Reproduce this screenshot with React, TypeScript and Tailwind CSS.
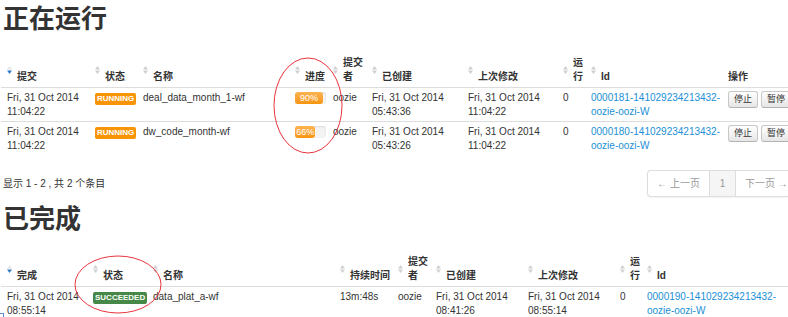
import React from "react";

type Sort = "both" | "desc" | "none";

const FONT = "font-['Liberation_Sans','Noto_Sans_CJK_SC',sans-serif]";

function SortIcon({ state }: { state: Sort }) {
  if (state === "none") return null;
  const up = state === "desc" ? "#e6e6e6" : "#d0d0d0";
  const down = state === "desc" ? "#2f7bc4" : "#d0d0d0";
  return (
    <svg
      className="absolute left-[6px] top-1/2 -translate-y-1/2"
      width="5"
      height="9"
      viewBox="0 0 5 9"
    >
      <polygon points="0,4 2.5,0.5 5,4" fill={up} />
      <polygon points="0,5 5,5 2.5,8.5" fill={down} />
    </svg>
  );
}

function Th({ label, sort = "both" }: { label: string; sort?: Sort }) {
  return (
    <th
      className={`relative text-left align-bottom font-bold pt-[3px] pb-[3px] pr-0 ${
        sort === "none" ? "pl-[6px]" : "pl-[16px]"
      }`}
    >
      <SortIcon state={sort} />
      {label}
    </th>
  );
}

function Td({ children }: { children?: React.ReactNode }) {
  return (
    <td className="align-top border-t border-[#dddddd] pt-[3px] pb-[2px] pl-[6px] pr-0">
      {children}
    </td>
  );
}

function TwoLine({ a, b }: { a: string; b: string }) {
  return (
    <>
      <span className="block whitespace-nowrap">{a}</span>
      <span className="block whitespace-nowrap">{b}</span>
    </>
  );
}

function Badge({ text, tone }: { text: string; tone: "warn" | "ok" }) {
  return (
    <span
      className={`mt-[1px] inline-block rounded-[2px] px-[2px] text-[8px] leading-[12px] font-bold text-white ${
        tone === "warn" ? "bg-[#f89406]" : "bg-[#468847]"
      }`}
    >
      {text}
    </span>
  );
}

function Progress({ pct }: { pct: number }) {
  return (
    <div className="mt-[1px] h-[12px] w-[31px] rounded-[3px] bg-[#f3f3f3] shadow-[inset_0_1px_2px_rgba(0,0,0,0.1)]">
      <div
        className="h-full rounded-[3px] bg-linear-to-b from-[#fbb450] to-[#f89406] text-center text-[9px] leading-[12px] whitespace-nowrap text-white"
        style={{ width: `${pct}%` }}
      >
        {pct}%
      </div>
    </div>
  );
}

function Btn({ label }: { label: string }) {
  return (
    <button className="h-[17px] shrink-0 rounded-[3px] border border-[#c8c8c8] border-b-[#b3b3b3] bg-linear-to-b from-white to-[#e6e6e6] px-[5px] text-[9px] leading-[15px] text-[#333] shadow-[inset_0_1px_0_rgba(255,255,255,0.3)]">
      {label}
    </button>
  );
}

function JobLink({ id }: { id: string }) {
  return (
    <a className="block text-[#1b8fd6]">
      <TwoLine a={`${id}-141029234213432-`} b="oozie-oozi-W" />
    </a>
  );
}

const running = [
  {
    sub: "11:04:22",
    name: "deal_data_month_1-wf",
    pct: 90,
    created: "05:43:36",
    mod: "11:04:22",
    id: "0000181",
  },
  {
    sub: "11:04:22",
    name: "dw_code_month-wf",
    pct: 66,
    created: "05:43:26",
    mod: "11:04:22",
    id: "0000180",
  },
];

export default function App() {
  return (
    <div
      className={`relative h-[317px] w-[788px] overflow-hidden bg-white text-[10px] leading-[14px] text-[#333] ${FONT}`}
    >
      <h2 className="pt-[6px] pl-[3px] text-[26px] leading-[26px] font-bold text-[#333]">
        正在运行
      </h2>

      <table className="mt-[21px] ml-[1px] w-[841px] table-fixed border-collapse">
        <colgroup>
          <col className="w-[88px]" />
          <col className="w-[48px]" />
          <col className="w-[152px]" />
          <col className="w-[38px]" />
          <col className="w-[39px]" />
          <col className="w-[96px]" />
          <col className="w-[95px]" />
          <col className="w-[28px]" />
          <col className="w-[137px]" />
          <col className="w-[120px]" />
        </colgroup>
        <thead>
          <tr>
            <Th label="提交" sort="desc" />
            <Th label="状态" />
            <Th label="名称" />
            <Th label="进度" />
            <Th label="提交者" />
            <Th label="已创建" />
            <Th label="上次修改" />
            <Th label="运行" />
            <Th label="Id" />
            <Th label="操作" sort="none" />
          </tr>
        </thead>
        <tbody>
          {running.map((r) => (
            <tr key={r.id}>
              <Td>
                <TwoLine a="Fri, 31 Oct 2014" b={r.sub} />
              </Td>
              <Td>
                <Badge text="RUNNING" tone="warn" />
              </Td>
              <Td>{r.name}</Td>
              <Td>
                <Progress pct={r.pct} />
              </Td>
              <Td>oozie</Td>
              <Td>
                <TwoLine a="Fri, 31 Oct 2014" b={r.created} />
              </Td>
              <Td>
                <TwoLine a="Fri, 31 Oct 2014" b={r.mod} />
              </Td>
              <Td>0</Td>
              <Td>
                <JobLink id={r.id} />
              </Td>
              <Td>
                <div className="flex gap-[3px]">
                  <Btn label="停止" />
                  <Btn label="暂停" />
                </div>
              </Td>
            </tr>
          ))}
        </tbody>
      </table>

      <div className="mt-[15px] flex h-[27px] items-center">
        <div className="w-[647px] shrink-0 pl-[3px]">显示 1 - 2 , 共 2 个条目</div>
        <div className="flex h-[27px] shrink-0 rounded-l-[4px] border border-r-0 border-[#dddddd] text-[#999] shadow-[0_1px_2px_rgba(0,0,0,0.05)]">
          <span className="flex w-[61px] items-center justify-center whitespace-nowrap">
            ← 上一页
          </span>
          <span className="flex w-[26px] items-center justify-center border-l border-[#dddddd] bg-[#f5f5f5]">
            1
          </span>
          <span className="flex items-center border-l border-[#dddddd] pl-[9px] whitespace-nowrap">
            下一页 →
          </span>
        </div>
      </div>

      <h2 className="mt-[9px] pl-[3px] text-[26px] leading-[26px] font-bold text-[#333]">
        已完成
      </h2>

      <table className="mt-[20px] ml-[1px] w-[800px] table-fixed border-collapse">
        <colgroup>
          <col className="w-[86px]" />
          <col className="w-[60px]" />
          <col className="w-[187px]" />
          <col className="w-[58px]" />
          <col className="w-[38px]" />
          <col className="w-[92px]" />
          <col className="w-[92px]" />
          <col className="w-[27px]" />
          <col className="w-[160px]" />
        </colgroup>
        <thead>
          <tr>
            <Th label="完成" sort="desc" />
            <Th label="状态" />
            <Th label="名称" />
            <Th label="持续时间" />
            <Th label="提交者" />
            <Th label="已创建" />
            <Th label="上次修改" />
            <Th label="运行" />
            <Th label="Id" />
          </tr>
        </thead>
        <tbody>
          <tr>
            <Td>
              <TwoLine a="Fri, 31 Oct 2014" b="08:55:14" />
            </Td>
            <Td>
              <Badge text="SUCCEEDED" tone="ok" />
            </Td>
            <Td>data_plat_a-wf</Td>
            <Td>13m:48s</Td>
            <Td>oozie</Td>
            <Td>
              <TwoLine a="Fri, 31 Oct 2014" b="08:41:26" />
            </Td>
            <Td>
              <TwoLine a="Fri, 31 Oct 2014" b="08:55:14" />
            </Td>
            <Td>0</Td>
            <Td>
              <JobLink id="0000190" />
            </Td>
          </tr>
        </tbody>
      </table>

      {/* hand-drawn highlight rings */}
      <svg
        className="pointer-events-none absolute top-0 left-0"
        width="788"
        height="317"
        viewBox="0 0 788 317"
      >
        <ellipse cx="308" cy="105.5" rx="34" ry="47.5" fill="none" stroke="#e8343a" strokeWidth="1" />
        <ellipse cx="118" cy="284.5" rx="43" ry="28.5" fill="none" stroke="#e8343a" strokeWidth="1" />
      </svg>

      {/* selection corner mark */}
      <div className="absolute top-[313px] left-0 h-[5px] w-[4px] border-t border-r border-[#5b8fd0]" />
    </div>
  );
}
